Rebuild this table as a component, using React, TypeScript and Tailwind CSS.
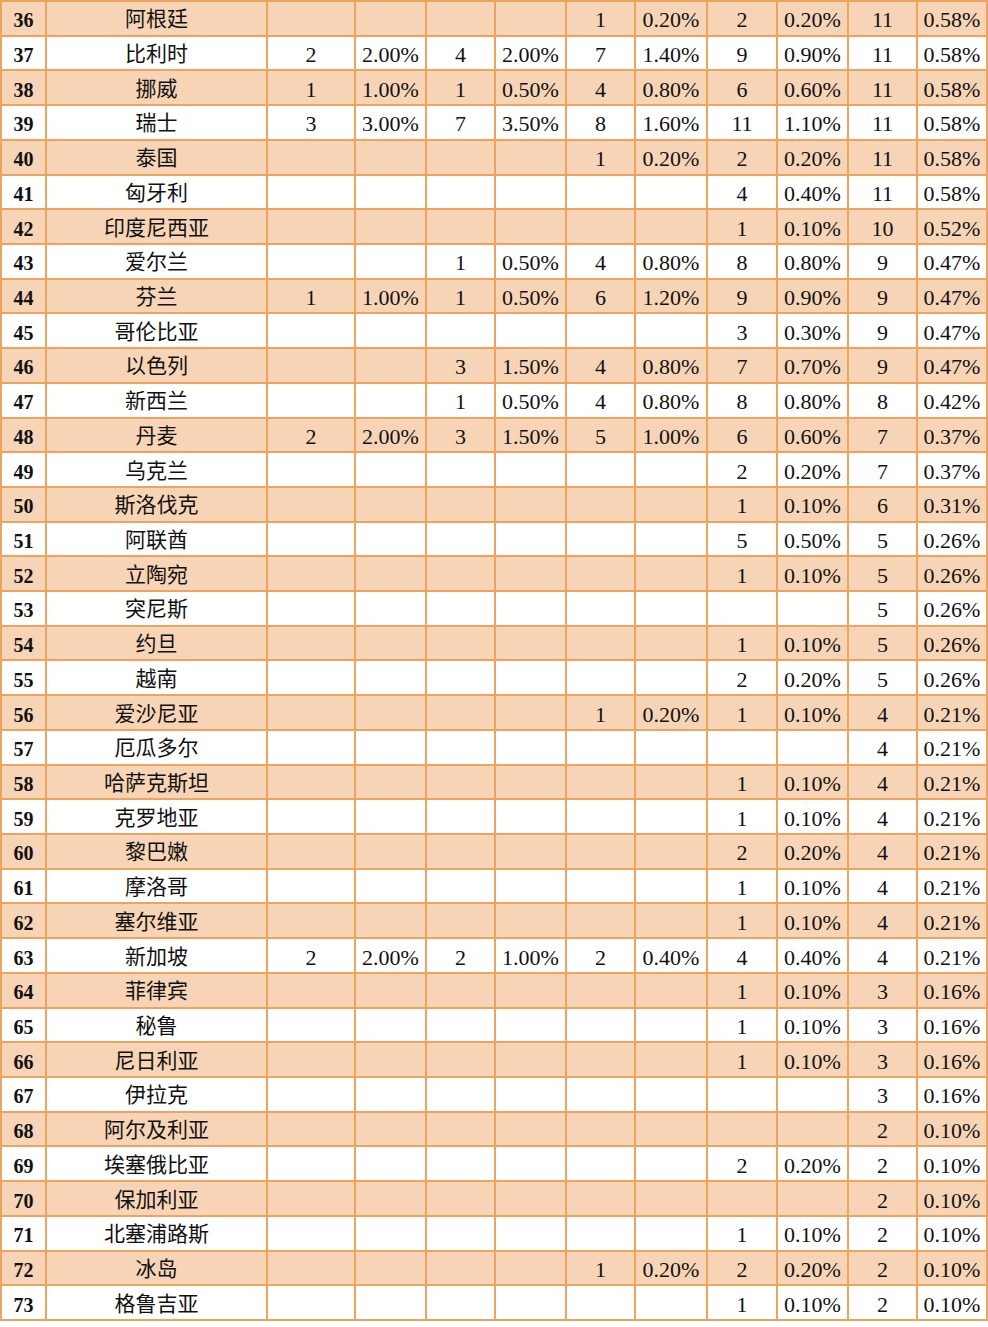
import React from 'react';

type Row = [number, string, ...string[]];

const e = '';

const rows: Row[] = [
  [36, '阿根廷', e, e, e, e, '1', '0.20%', '2', '0.20%', '11', '0.58%'],
  [37, '比利时', '2', '2.00%', '4', '2.00%', '7', '1.40%', '9', '0.90%', '11', '0.58%'],
  [38, '挪威', '1', '1.00%', '1', '0.50%', '4', '0.80%', '6', '0.60%', '11', '0.58%'],
  [39, '瑞士', '3', '3.00%', '7', '3.50%', '8', '1.60%', '11', '1.10%', '11', '0.58%'],
  [40, '泰国', e, e, e, e, '1', '0.20%', '2', '0.20%', '11', '0.58%'],
  [41, '匈牙利', e, e, e, e, e, e, '4', '0.40%', '11', '0.58%'],
  [42, '印度尼西亚', e, e, e, e, e, e, '1', '0.10%', '10', '0.52%'],
  [43, '爱尔兰', e, e, '1', '0.50%', '4', '0.80%', '8', '0.80%', '9', '0.47%'],
  [44, '芬兰', '1', '1.00%', '1', '0.50%', '6', '1.20%', '9', '0.90%', '9', '0.47%'],
  [45, '哥伦比亚', e, e, e, e, e, e, '3', '0.30%', '9', '0.47%'],
  [46, '以色列', e, e, '3', '1.50%', '4', '0.80%', '7', '0.70%', '9', '0.47%'],
  [47, '新西兰', e, e, '1', '0.50%', '4', '0.80%', '8', '0.80%', '8', '0.42%'],
  [48, '丹麦', '2', '2.00%', '3', '1.50%', '5', '1.00%', '6', '0.60%', '7', '0.37%'],
  [49, '乌克兰', e, e, e, e, e, e, '2', '0.20%', '7', '0.37%'],
  [50, '斯洛伐克', e, e, e, e, e, e, '1', '0.10%', '6', '0.31%'],
  [51, '阿联酋', e, e, e, e, e, e, '5', '0.50%', '5', '0.26%'],
  [52, '立陶宛', e, e, e, e, e, e, '1', '0.10%', '5', '0.26%'],
  [53, '突尼斯', e, e, e, e, e, e, e, e, '5', '0.26%'],
  [54, '约旦', e, e, e, e, e, e, '1', '0.10%', '5', '0.26%'],
  [55, '越南', e, e, e, e, e, e, '2', '0.20%', '5', '0.26%'],
  [56, '爱沙尼亚', e, e, e, e, '1', '0.20%', '1', '0.10%', '4', '0.21%'],
  [57, '厄瓜多尔', e, e, e, e, e, e, e, e, '4', '0.21%'],
  [58, '哈萨克斯坦', e, e, e, e, e, e, '1', '0.10%', '4', '0.21%'],
  [59, '克罗地亚', e, e, e, e, e, e, '1', '0.10%', '4', '0.21%'],
  [60, '黎巴嫩', e, e, e, e, e, e, '2', '0.20%', '4', '0.21%'],
  [61, '摩洛哥', e, e, e, e, e, e, '1', '0.10%', '4', '0.21%'],
  [62, '塞尔维亚', e, e, e, e, e, e, '1', '0.10%', '4', '0.21%'],
  [63, '新加坡', '2', '2.00%', '2', '1.00%', '2', '0.40%', '4', '0.40%', '4', '0.21%'],
  [64, '菲律宾', e, e, e, e, e, e, '1', '0.10%', '3', '0.16%'],
  [65, '秘鲁', e, e, e, e, e, e, '1', '0.10%', '3', '0.16%'],
  [66, '尼日利亚', e, e, e, e, e, e, '1', '0.10%', '3', '0.16%'],
  [67, '伊拉克', e, e, e, e, e, e, e, e, '3', '0.16%'],
  [68, '阿尔及利亚', e, e, e, e, e, e, e, e, '2', '0.10%'],
  [69, '埃塞俄比亚', e, e, e, e, e, e, '2', '0.20%', '2', '0.10%'],
  [70, '保加利亚', e, e, e, e, e, e, e, e, '2', '0.10%'],
  [71, '北塞浦路斯', e, e, e, e, e, e, '1', '0.10%', '2', '0.10%'],
  [72, '冰岛', e, e, e, e, '1', '0.20%', '2', '0.20%', '2', '0.10%'],
  [73, '格鲁吉亚', e, e, e, e, e, e, '1', '0.10%', '2', '0.10%'],
];

export default function App() {
  return (
    <div className="w-[988px] h-[1327px] bg-white">
      <div className="grid h-[1321px] w-[988px] gap-[2px] p-[2px] bg-[#eca45f] grid-cols-[43px_219px_86px_69px_67px_69px_67px_70px_68px_69px_67px_1fr] grid-rows-[repeat(38,minmax(0,1fr))] text-[#111111] font-['Liberation_Serif','Noto_Sans_CJK_SC',serif]">
        {rows.map(([rank, name, ...vals]) => {
          const bg = rank % 2 === 0 ? 'bg-[#f7d4b6]' : 'bg-white';
          return (
            <React.Fragment key={rank}>
              <div className={`${bg} flex items-center justify-center pt-[4px] font-bold text-[20px] leading-none`}>
                {rank}
              </div>
              <div className={`${bg} flex items-center justify-center pt-[3px] text-[21px] leading-none`}>
                {name}
              </div>
              {vals.map((v, i) => (
                <div key={i} className={`${bg} flex items-center justify-center pt-[4px] text-[22px] leading-none`}>
                  {v}
                </div>
              ))}
            </React.Fragment>
          );
        })}
      </div>
    </div>
  );
}
